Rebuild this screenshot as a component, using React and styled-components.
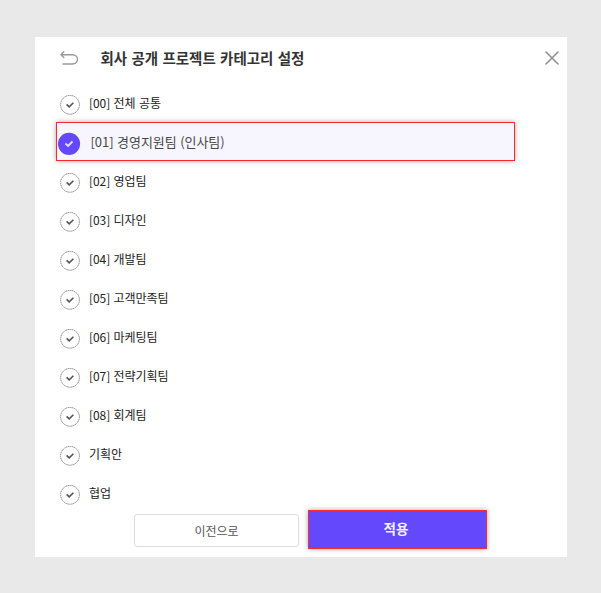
import React, { useState } from 'react'
import styled, { createGlobalStyle } from 'styled-components'

const GlobalStyle = createGlobalStyle`
    * {
        box-sizing: border-box;
    }

    body {
        margin: 0;
        background: #e9e9e9;
        font-family: 'Noto Sans CJK KR', sans-serif;
    }

    button {
        font-family: inherit;
        padding: 0;
        cursor: pointer;
    }
`

const Page = styled.div`
    height: 593px;
    padding: 37px 34px 36px 35px;
    overflow: hidden;
`

const Modal = styled.div`
    display: flex;
    flex-direction: column;
    height: 520px;
    background: #fff;
`

const Header = styled.header`
    display: flex;
    align-items: center;
    height: 48px;
    padding: 0 8px 6px 25px;
`

const Title = styled.h1`
    flex: 1;
    margin: 0 0 0 21.5px;
    color: #333;
    font-size: 14.5px;
    font-weight: 700;
    line-height: 20px;
    word-spacing: 1px;
`

const IconButton = styled.button`
    display: flex;
    border: 0;
    background: none;
`

const List = styled.ul`
    height: 429px;
    margin: 0;
    padding: 0 52px 0 21px;
    list-style: none;
`

const Row = styled.li`
    display: flex;
    align-items: center;
    height: 39px;
    padding-left: 4px;
    color: #222;
    font-size: 12px;
    letter-spacing: -0.05px;
    word-spacing: 0.7px;
    cursor: pointer;
`

const SelectedRow = styled(Row)`
    margin: -2px 0 2px;
    padding: 3px 0 0 1px;
    border: 1px solid #f8282d;
    background: #f7f6ff;
    box-shadow: 0 0 5px rgba(0, 0, 0, 0.35);
    color: #484848;
    font-size: 13px;
`

const Label = styled.span`
    margin: 0 0 3px ${props => (props.$selected ? 9.5 : 9)}px;
    line-height: 18px;
    white-space: nowrap;
`

const Footer = styled.footer`
    display: flex;
    align-items: center;
    gap: 9px;
    height: 39px;
    margin: -4px 0 0 99px;
`

const CancelButton = styled.button`
    width: 165px;
    height: 33px;
    margin-top: 1px;
    border: 1px solid #ddd;
    border-radius: 3px;
    background: #fff;
    color: #555;
    font-size: 12px;
    letter-spacing: -0.1px;
`

const ApplyButton = styled.button`
    width: 179px;
    height: 39px;
    padding: 0 3px 3px 0;
    border: 1px solid #ff2a30;
    background: #6449fc;
    box-shadow: 0 0 5px rgba(0, 0, 0, 0.35);
    color: #f4f1ff;
    font-size: 13.5px;
    font-weight: 700;
`

const BackIcon = () => (
    <svg width="19" height="15" viewBox="0 0 19 15" fill="none" stroke="#999" strokeWidth="1.4" strokeLinecap="round">
        <path d="M3.8 0.8 L1 3.7 L3.8 6.5 M1.2 3.7 H12.5 C19.2 3.7 19.2 13 12.5 13 H3" />
    </svg>
)

const CloseIcon = () => (
    <svg width="14" height="14" viewBox="0 0 14 14" stroke="#8e8e8e" strokeWidth="1.5" strokeLinecap="round">
        <path d="M1 1 L13 13 M13 1 L1 13" />
    </svg>
)

const CheckIcon = ({ selected }) => selected ? (
    <svg width="23" height="23" viewBox="0 0 23 23" fill="none">
        <circle cx="11" cy="11.8" r="11.1" fill="#6449fc" />
        <path d="M7.4 11.5 L10.1 13.9 L14.5 9.5" stroke="#e6e0ff" strokeWidth="1.8" />
    </svg>
) : (
    <svg width="20" height="20" viewBox="0 0 20 20" fill="none">
        <circle cx="10" cy="9.8" r="9.4" stroke="#888" strokeWidth="1" strokeDasharray="1.5 0.5" />
        <path d="M6.6 9.3 L9.2 11.8 L13.4 7.7" stroke="#555" strokeWidth="1.6" />
    </svg>
)

const categories = [
    '[00] 전체 공통',
    '[01] 경영지원팀 (인사팀)',
    '[02] 영업팀',
    '[03] 디자인',
    '[04] 개발팀',
    '[05] 고객만족팀',
    '[06] 마케팅팀',
    '[07] 전략기획팀',
    '[08] 회계팀',
    '기획안',
    '협업',
]

const App = () => {
    const [current, setCurrent] = useState(1)

    return (
        <Page>
            <GlobalStyle />
            <Modal>
                <Header>
                    <IconButton aria-label="뒤로">
                        <BackIcon />
                    </IconButton>
                    <Title>회사 공개 프로젝트 카테고리 설정</Title>
                    <IconButton aria-label="닫기">
                        <CloseIcon />
                    </IconButton>
                </Header>
                <List>
                    {categories.map((name, index) => {
                        const selected = index === current
                        const Item = selected ? SelectedRow : Row
                        return (
                            <Item key={name} onClick={() => setCurrent(index)}>
                                <CheckIcon selected={selected} />
                                <Label $selected={selected}>{name}</Label>
                            </Item>
                        )
                    })}
                </List>
                <Footer>
                    <CancelButton>이전으로</CancelButton>
                    <ApplyButton>적용</ApplyButton>
                </Footer>
            </Modal>
        </Page>
    )
}

export default App
